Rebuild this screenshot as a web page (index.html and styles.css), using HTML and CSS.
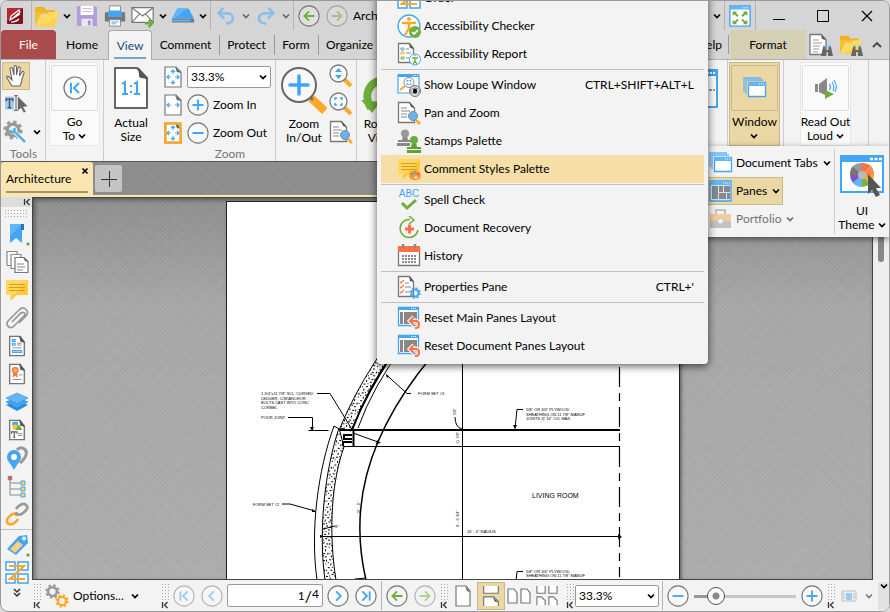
FILE: index.html
```html
<!DOCTYPE html>
<html lang="en">
<head>
    <meta charset="UTF-8">
    <meta name="viewport" content="width=device-width, initial-scale=1.0">
    <title>Architecture</title>
    <link rel="stylesheet" href="styles.css">
</head>
<body>

<!-- Icon sprite -->
<svg class="sprite" aria-hidden="true">
    <symbol id="chev" viewBox="0 0 8 8"><path d="M1 2.5l3 3 3-3" fill="none" stroke="currentColor" stroke-width="1.7"/></symbol>
    <symbol id="chev-up" viewBox="0 0 10 8"><path d="M1 6l4-4 4 4" fill="none" stroke="#444" stroke-width="1.8"/></symbol>
    <symbol id="collapse" viewBox="0 0 8 8"><path d="M1.5 1v6M6.5 1l-3 3 3 3" fill="none" stroke="#333" stroke-width="1.3"/></symbol>
    <symbol id="page" viewBox="0 0 24 24"><path d="M4 1.500h11l5 6v15H4z" fill="#fff" stroke="#777" stroke-width="1.5"/><path d="M15 1l5 7-4-1z" fill="#555" stroke="#555"/></symbol>
    <symbol id="logo" viewBox="0 0 16 16"><rect width="16" height="16" rx="1" fill="#7f1420"/><path d="M0 0h16L0 13z" fill="#b52832"/><path d="M3 12l1-4 8-6 1 2-7 6zM4 14c3 0 6-1 8-3M5 11l8-5" stroke="#fff" stroke-width="1.200" fill="none"/></symbol>
    <symbol id="folder" viewBox="0 0 24 24"><path d="M0 3h9l2 3h9v4H0z" fill="#f0b323"/><path d="M0 4v19l6-13h14V8H0z" fill="#f7c02e"/><path d="M6 11h6l2-3h10l-4 15H1z" fill="#ffd964"/><path d="M1 23l21-9-2 9z" fill="#ffd04a"/></symbol>
    <symbol id="save" viewBox="0 0 24 24"><path d="M1 1h20l2 2v20H1z" fill="#b39ddb"/><path d="M5 1h14v10H5z" fill="#fff"/><path d="M7 4h10M7 7h10" stroke="#bbb"/><path d="M6 15h12v8H6z" fill="#ece6f7"/><path d="M13 17h3v5h-3z" fill="#a58fd0"/></symbol>
    <symbol id="print" viewBox="0 0 24 24"><path d="M6 1h12v6H6z" fill="#fff" stroke="#888"/><path d="M1 8h22v10H1z" fill="#777"/><path d="M5 6h14l1 7H4z" fill="#42a5f5"/><path d="M6 16h12v7H6z" fill="#fff" stroke="#888"/><path d="M8 18.500h8M8 20.500h5" stroke="#42a5f5"/></symbol>
    <symbol id="mail" viewBox="0 0 26 24"><path d="M1 3h23v16H1z" fill="#fff" stroke="#777" stroke-width="1.3"/><path d="M1 3l11.500 9L24 3M1 19l8-9m15 9l-8-9" fill="none" stroke="#777" stroke-width="1.200"/><path d="M15 20h8m-4-4l4 4-4 4" fill="none" stroke="#6fae3c" stroke-width="2.500"/></symbol>
    <symbol id="scan" viewBox="0 0 26 24"><path d="M7 4h12l6 11H1z" fill="#42a5f5"/><path d="M7 4h10L4 15H1z" fill="#64b5f6"/><path d="M1 15h24v4H1z" fill="#777"/><path d="M1 16h20v2H1z" fill="#64b5f6"/></symbol>
    <symbol id="undo" viewBox="0 0 22 20"><path d="M8 1L3 7l6 6M3 7h10c7 0 8 11 0 11h-2" fill="none" stroke="#8fbfe8" stroke-width="3"/></symbol>
    <symbol id="back" viewBox="0 0 24 24"><circle cx="12" cy="12" r="11" fill="#f8f8f8" fill-opacity=".3" stroke="#777" stroke-width="1.200"/><path d="M18 12H7m5-5l-5 5 5 5" fill="none" stroke="#6fae3c" stroke-width="2"/></symbol>
    <symbol id="full" viewBox="0 0 24 24"><path d="M1 1h22v22H1z" fill="#fff" stroke="#42a5f5" stroke-width="1.500"/><path d="M1 1h22v4H1z" fill="#64b5f6"/><path d="M14 3h7" stroke="#fff" stroke-dasharray="1 1"/><path d="M4 12V7h5L7.500 8.500l3 3-1.500 1.500-3-3zM20 12V7h-5l1.500 1.500-3 3L15 13l3-3zM4 16v5h5l-1.500-1.500 3-3L9 15l-3 3zM20 16v5h-5l1.500-1.500-3-3L15 15l3 3z" fill="#6fae3c"/></symbol>
    <symbol id="binoc" viewBox="0 0 12 12"><path d="M2 2h2.500v3h3V2H10l2 9H7V7H5v4H0z" fill="#666"/><path d="M2 1.500h2.500m3 0H10" stroke="#42a5f5" stroke-width="1.500"/></symbol>
    <symbol id="find-doc" viewBox="0 0 24 24"><path d="M1 1.500h11l5 5v15H1z" fill="#fff" stroke="#777" stroke-width="1.300"/><path d="M12 1l5 6-4-1z" fill="#555"/><path d="M4 7h6M4 10h9M4 13h7M4 16h6M4 19h5" stroke="#999"/><use href="#binoc" x="12" y="12" width="12" height="12"/></symbol>
    <symbol id="find-folder" viewBox="0 0 24 24"><use href="#folder" width="24" height="22"/><use href="#binoc" x="12" y="12" width="12" height="12"/></symbol>
    <symbol id="hand" viewBox="0 0 24 24"><path d="M8 22l-5-8c-1-2 1-2 2-1l3 3L6 5c0-2 2-2 2.500 0l1.500 6V3c0-2 2.500-2 2.500 0v8l1.500-7c.5-2 2.500-1 2.300.5L15.500 12l2.500-4c1-1.500 2.500-.5 2 1l-2 6c0 3-1 5-2 7z" fill="#fff" stroke="#666" stroke-width="1.100"/></symbol>
    <symbol id="select-text" viewBox="0 0 26 24"><path d="M1 4h10v14H1z" fill="#9fcdf5"/><path d="M2.500 9V6.500h7V9M6 7v9M4 16h4" stroke="#555" stroke-width="1.700" fill="none"/><path d="M11 3h4m-2 0v16m-2 0h4" stroke="#555" fill="none"/><path d="M15 4v15l3.500-3 3 5.500 2-1.500-3-5 5-.5z" fill="#666"/></symbol>
    <symbol id="gear" viewBox="0 0 24 24"><circle cx="12" cy="12" r="7" fill="none" stroke="currentColor" stroke-width="4"/><circle cx="12" cy="12" r="10" fill="none" stroke="currentColor" stroke-width="3" stroke-dasharray="4 3.850"/></symbol>
    <symbol id="tool-gear" viewBox="0 0 24 24"><use href="#gear" width="20" height="20" color="#999"/><path d="M10 10l12 12" stroke="#fff" stroke-width="4.500"/><path d="M7 10c1 4 6 2 4-2M12 12l10 10" fill="none" stroke="#5aaeea" stroke-width="2.800"/></symbol>
    <symbol id="first" viewBox="0 0 24 24"><circle cx="12" cy="12" r="11" fill="#fafafa" stroke="#777" stroke-width="1.200"/><path d="M8 7v10m8-10l-5 5 5 5" fill="none" stroke="#42a5f5" stroke-width="2"/></symbol>
    <symbol id="prev" viewBox="0 0 24 24"><circle cx="12" cy="12" r="11" fill="#fafafa" stroke="#777" stroke-width="1.200"/><path d="M14 7l-5 5 5 5" fill="none" stroke="#42a5f5" stroke-width="2"/></symbol>
    <symbol id="plus" viewBox="0 0 24 24"><circle cx="12" cy="12" r="11" fill="#f8f8f8" stroke="#777" stroke-width="1.200"/><path d="M6 12h12M12 6v12" stroke="#42a5f5" stroke-width="2"/></symbol>
    <symbol id="minus" viewBox="0 0 24 24"><circle cx="12" cy="12" r="11" fill="#f8f8f8" stroke="#777" stroke-width="1.200"/><path d="M6 12h12" stroke="#42a5f5" stroke-width="2"/></symbol>
    <symbol id="actual" viewBox="0 0 34 42"><path d="M1 1h22l10 10v30H1z" fill="#fff" stroke="#666" stroke-width="2" stroke-linejoin="round"/><path d="M22 1h3l8 9v3c-3-3-8-1-8-4s0-6-3-8z" fill="#555"/><path d="M8 17l3-2v12m-3 0h6M20 17l3-2v12m-3 0h6" fill="none" stroke="#42a5f5" stroke-width="2"/><path d="M16 18h2v2h-2zM16 24h2v2h-2z" fill="#42a5f5"/></symbol>
    <symbol id="fit" viewBox="0 0 18 22"><path d="M1 1h11l5 5v15H1z" fill="#fff" stroke="#777" stroke-width="1.200"/><path d="M11 1l6 6-4-1z" fill="#555"/><path d="M7 6l2-2 2 2M9 4v4M7 16l2 2 2-2m-2 2v-4M5 9l-2 2 2 2m-2-2h4M13 9l2 2-2 2m2-2h-4" fill="none" stroke="#42a5f5" stroke-width="1.200"/></symbol>
    <symbol id="fit-w" viewBox="0 0 18 22"><path d="M1 1h11l5 5v15H1z" fill="#fff" stroke="#777" stroke-width="1.200"/><path d="M11 1l6 6-4-1z" fill="#555"/><path d="M5 9l-2 2 2 2m-2-2h4M13 9l2 2-2 2m2-2h-4" fill="none" stroke="#42a5f5" stroke-width="1.200"/></symbol>
    <symbol id="fit-v" viewBox="0 0 18 22"><use href="#fit" width="18" height="22"/><path d="M1.500 1.500h15v19h-15z" fill="none" stroke="#ffa726" stroke-width="2.500"/></symbol>
    <symbol id="zoom-big" viewBox="0 0 46 48"><path d="M30 31l14 13" stroke="#ffa726" stroke-width="8"/><path d="M28 29l4 4" stroke="#777" stroke-width="3"/><circle cx="18" cy="18" r="17" fill="#f8f8f8" stroke="#666" stroke-width="2"/><path d="M9 18h18M18 9v18" stroke="#42a5f5" stroke-width="3.500" stroke-linecap="round"/></symbol>
    <symbol id="lens" viewBox="0 0 24 24"><path d="M15 15l7 7" stroke="#ffa726" stroke-width="4"/><circle cx="9.500" cy="9.500" r="8.500" fill="#fafafa" stroke="#777" stroke-width="1.300"/></symbol>
    <symbol id="zoom-page" viewBox="0 0 24 24"><use href="#lens" width="24" height="24"/><path d="M6 8l3.500-4L13 8zM6 11l3.500 4 3.500-4z" fill="#42a5f5"/></symbol>
    <symbol id="zoom-area" viewBox="0 0 24 24"><use href="#lens" width="24" height="24"/><path d="M6 8V6h2m3 0h2v2m0 3v2h-2m-3 0H6v-2" fill="none" stroke="#42a5f5" stroke-width="1.500"/></symbol>
    <symbol id="pan" viewBox="0 0 24 24"><path d="M1.500 1.500h11l5 6v14h-16z" fill="#fff" stroke="#777" stroke-width="1.300"/><path d="M12 1l6 6-4-1z" fill="#555"/><path d="M4 7h6M4 10h9M4 13h6M4 16h6" stroke="#888"/><path d="M19 19l4 4" stroke="#ffa726" stroke-width="2.500"/><circle cx="16" cy="15" r="4.500" fill="#64b5f6" stroke="#888"/></symbol>
    <symbol id="rotate" viewBox="0 0 40 40"><path d="M10 34C0 18 12 2 30 7" fill="none" stroke="#6fae3c" stroke-width="8"/><path d="M0 26l19 2-8 11z" fill="#6fae3c"/></symbol>
    <symbol id="split" viewBox="0 0 34 40"><path d="M1 1h31v37H1z" fill="#fff" stroke="#42a5f5" stroke-width="2"/><path d="M1 1h31v6H1z" fill="#42a5f5"/><path d="M22 4h9" stroke="#fff" stroke-width="2" stroke-dasharray="2 1"/><path d="M4 21h26" stroke="#333" stroke-dasharray="3 1"/></symbol>
    <symbol id="windows" viewBox="0 0 24 22"><path d="M1 15V1h17M3 17V3h17" fill="none" stroke="#64b5f6" stroke-width="1.300"/><path d="M5.500 5.500h17v14h-17z" fill="#fff" stroke="#42a5f5" stroke-width="1.300"/><path d="M5 5h18v4H5z" fill="#64b5f6"/><path d="M16 7h6" stroke="#fff" stroke-dasharray="1 1"/></symbol>
    <symbol id="speaker" viewBox="0 0 24 24"><path d="M1 8h3v8H1zM5 8l8-6v18l-8-4z" fill="#888"/><path d="M11 14l9 4-9 5z" fill="#6fae3c"/><path d="M15 8q3 3 0 6M18 6q3 4 1 9M20 4q4 6 1 12" fill="none" stroke="#42a5f5" stroke-width="1.200"/></symbol>
    <symbol id="panes" viewBox="0 0 24 22"><path d="M1 1h21v20H1z" fill="#cfe4f7" stroke="#42a5f5" stroke-width="1.300"/><path d="M1 1h21v4H1z" fill="#64b5f6"/><path d="M14 3h7" stroke="#fff" stroke-dasharray="1 1"/><path d="M3 6h6v13H3zM10 6h4v6h-4zM15 6h6v6h-6zM10 13h7v6h-7zM18 13h3v6h-3z" fill="#888"/></symbol>
    <symbol id="portfolio" viewBox="0 0 24 22"><path d="M7 6V2h9v4" fill="none" stroke="#999" stroke-width="2"/><path d="M1 6h21v8H1z" fill="#f3ae55"/><path d="M1 13h21v7H1z" fill="#999"/><circle cx="11.500" cy="13" r="3" fill="#eee" stroke="#999"/></symbol>
    <symbol id="theme" viewBox="0 0 44 42"><path d="M1 1h42v36H1z" fill="#fff" stroke="#42a5f5" stroke-width="2"/><path d="M1 1h42v6H1z" fill="#42a5f5"/><path d="M30 4h12" stroke="#fff" stroke-width="2.500" stroke-dasharray="3 1.500"/><path d="M22 20L13 11A12 12 0 0 1 22 8z" fill="#999"/><path d="M22 20V8a12 12 0 0 1 9 3z" fill="#ff7043"/><path d="M22 20l9-9a12 12 0 0 1 3 9z" fill="#ff8a50"/><path d="M22 20h12a12 12 0 0 1-4 9z" fill="#ffa726"/><path d="M22 20l8 9a12 12 0 0 1-8 3z" fill="#7cb342"/><path d="M22 20v12a12 12 0 0 1-9-4z" fill="#64b5f6"/><path d="M22 20l-9 8a12 12 0 0 1-3-8z" fill="#7e57c2"/><path d="M22 20H10a12 12 0 0 1 3-9z" fill="#777"/><circle cx="22" cy="20" r="4" fill="#bbb"/><path d="M28 19v20l4-4 4 7 4-2-4-7h5z" fill="#555"/></symbol>

    <symbol id="order" viewBox="0 0 24 24"><path d="M1 1h9v8H1zM13 1h10v8H13zM1 13h9v9H1zM13 13h10v9H13z" fill="#fff" stroke="#42a5f5" stroke-width="1.500"/><path d="M4 5h15L5 18h15" fill="none" stroke="#ffa726" stroke-width="2.200"/></symbol>
    <symbol id="acc-check" viewBox="0 0 24 24"><circle cx="12" cy="12" r="11" fill="#fff" stroke="#42a5f5" stroke-width="1.300"/><circle cx="12" cy="5" r="2" fill="#ffa726"/><path d="M5 9h14M12 9v5l-4 7M12 14l3 4" fill="none" stroke="#ffa726" stroke-width="2.500"/><circle cx="18" cy="18" r="6" fill="#6fae3c"/><path d="M15 18l2 2 4-4" fill="none" stroke="#fff" stroke-width="1.700"/></symbol>
    <symbol id="acc-report" viewBox="0 0 24 24"><path d="M1.500 1.500h11l4 5v14h-15z" fill="#fff" stroke="#777" stroke-width="1.300"/><path d="M12 1l5 6-4-1z" fill="#555"/><path d="M4 6h3v2H4z" fill="none" stroke="#42a5f5"/><path d="M4 10h3v2H4z" fill="none" stroke="#ffa726"/><path d="M4 15h3v2H4z" fill="none" stroke="#6fae3c"/><path d="M9 7h3M9 11h5M9 16h4" stroke="#888"/><circle cx="18" cy="17.500" r="5.500" fill="#fff" stroke="#42a5f5"/><path d="M15 16h6m-3 0v3l-2 3m2-3l2 3m-2-8v-1" fill="none" stroke="#6fae3c" stroke-width="1.300"/></symbol>
    <symbol id="loupe" viewBox="0 0 24 24"><path d="M1 2h21v18H1z" fill="#fff" stroke="#42a5f5" stroke-width="1.200"/><path d="M1 1h21v3H1z" fill="#42a5f5"/><path d="M16 2.500h5" stroke="#fff" stroke-dasharray="1 1"/><path d="M3 17l5-4" stroke="#ffa726" stroke-width="2"/><circle cx="12" cy="9.500" r="5" fill="#fff" stroke="#888"/><path d="M10 9V7.500h1.500m1 0H14V9m0 1v1.500h-1.500m-1 0H10V10" fill="none" stroke="#42a5f5"/><circle cx="18" cy="18" r="5.500" fill="#ddd" stroke="#777"/><path d="M13 18q5-6 10 0-5 5-10 0" fill="#fff" stroke="#777"/><circle cx="18" cy="18" r="2.300" fill="#111"/></symbol>
    <symbol id="stamps" viewBox="0 0 24 24"><path d="M0 14h13v3H0zM1 11h4l1-4h4l1 4h3v2H1z" fill="#888"/><circle cx="8" cy="4.500" r="4" fill="#999"/><path d="M10 21h14v3H10zM10 18h4l1-4h4l1 4h4v2H10z" fill="#5f9e35"/><circle cx="17" cy="11" r="4" fill="#6fae3c"/></symbol>
    <symbol id="comment" viewBox="0 0 24 24"><path d="M1 2h22v15H12l-7 6 1-6H1z" fill="#ffc83d"/><path d="M1 2h22L9 17H1z" fill="#ffd75e"/><path d="M4 6.500h16M4 9.500h16M4 12.500h16" stroke="#d99e14"/></symbol>
    <symbol id="comment-style" viewBox="0 0 24 24"><use href="#comment" width="24" height="24"/><ellipse cx="18" cy="18.500" rx="6" ry="5" fill="#f79a3c"/><circle cx="15" cy="17" r="1.200" fill="#6fae3c"/><circle cx="18" cy="15.500" r="1.200" fill="#42a5f5"/><circle cx="21" cy="17" r="1.200" fill="#ef5350"/><circle cx="19" cy="20.500" r="1.500" fill="#f5dfa6"/></symbol>
    <symbol id="recovery" viewBox="0 0 24 24"><path d="M13 3.500A9 9 0 1 0 21 14" fill="none" stroke="#6fae3c" stroke-width="1.600"/><path d="M12 0l5 4-5 4" fill="none" stroke="#6fae3c" stroke-width="1.500"/><path d="M8 13h9M12.500 8.500v9" stroke="#ff7043" stroke-width="3"/></symbol>
    <symbol id="calendar" viewBox="0 0 24 24"><path d="M1.500 4h21v17.500h-21z" fill="#fff" stroke="#777" stroke-width="1.300"/><path d="M1 2h22v6H1z" fill="#ff7043"/><path d="M6 0v4M18 0v4" stroke="#888" stroke-width="2.500"/><path d="M5 12h14M5 15h14M5 18h14" stroke="#888" stroke-width="2" stroke-dasharray="2 1"/></symbol>
    <symbol id="props" viewBox="0 0 24 24"><path d="M1.500 1.500h11l4 5v15h-15z" fill="#fff" stroke="#777" stroke-width="1.300"/><path d="M12 1l5 6-4-1z" fill="#555"/><path d="M3 7l1 1 3-3M3 12l1 1 3-3M3 17l1 1 3-3" fill="none" stroke="#ff7043" stroke-width="1.200"/><path d="M8 8h4M8 12h6M8 17h4" stroke="#888"/><use href="#gear" x="12" y="12" width="12" height="12" color="#42a5f5"/></symbol>
    <symbol id="reset" viewBox="0 0 24 24"><path d="M1.500 1.500h20v18h-20z" fill="#fff" stroke="#42a5f5" stroke-width="1.300"/><path d="M1 1h21v3H1z" fill="#42a5f5"/><path d="M14 2.500h6" stroke="#fff" stroke-dasharray="1 1"/><path d="M3 6h3v12H3zM7 6h13v12H7z" fill="#888"/><path d="M17 11l-4 4 4 4m-4-4h6c4 0 4 7 0 7h-1" fill="none" stroke="#f4f4f4" stroke-width="4.500"/><path d="M17 11l-4 4 4 4m-4-4h6c4 0 4 7 0 7h-1" fill="none" stroke="#ff7043" stroke-width="2"/></symbol>

    <symbol id="bookmark" viewBox="0 0 24 24"><path d="M5 2h12v19l-6-5-6 5z" fill="#42a5f5"/><path d="M5 2h12L5 14z" fill="#64b5f6"/><path d="M16 2h3v6h-3z" fill="#1e78c8"/></symbol>
    <symbol id="thumbs" viewBox="0 0 24 24"><path d="M2 1.500h10v14H2z" fill="#fff" stroke="#888" stroke-width="1.200"/><path d="M6 4.500h10v14H6z" fill="#fff" stroke="#888" stroke-width="1.200"/><path d="M10 7.500h9l4 4v11H10z" fill="#fff" stroke="#777" stroke-width="1.200"/><path d="M18 7l5 5-3-1z" fill="#555"/><path d="M12 14h7M12 17h8M12 20h6" stroke="#888"/></symbol>
    <symbol id="clip" viewBox="0 0 24 24"><path d="M7 16l9-9c3-2 5 1 3 3L9 20c-4 4-9-1-6-5L14 4c5-5 11 1 7 6l-7 7" fill="none" stroke="#999" stroke-width="1.700"/></symbol>
    <symbol id="fields" viewBox="0 0 24 24"><use href="#page" width="24" height="24"/><path d="M7 5h3v2H7zM7 9h3v2H7zM7 17h10v2H7z" fill="none" stroke="#42a5f5" stroke-width="1.200"/><path d="M12 9h5M12 11h5M7 14h10" stroke="#888"/></symbol>
    <symbol id="sign" viewBox="0 0 24 24"><use href="#page" width="24" height="24"/><circle cx="10" cy="8" r="3" fill="#ffb74d" stroke="#ff7043" stroke-width="1.500"/><path d="M8 11l-1 5 3-2 3 2-1-5z" fill="#ff7043"/><path d="M14 13h4M7 18h10" stroke="#888"/></symbol>
    <symbol id="layers" viewBox="0 0 24 24"><path d="M1 15l11-5 11 5-11 6z" fill="#2f8de0"/><path d="M1 12l11-5 11 5-11 6z" fill="#42a5f5" stroke="#2583d0" stroke-width=".5"/><path d="M1 8l11-5 11 5-11 6z" fill="#64b5f6" stroke="#2583d0" stroke-width=".5"/></symbol>
    <symbol id="content" viewBox="0 0 24 24"><use href="#page" width="24" height="24"/><path d="M7 3h6v5H7z" fill="#42a5f5"/><circle cx="10" cy="9" r="3" fill="#ffc83d"/><path d="M10 12l4-6 4 6z" fill="#6fae3c"/><path d="M6 16v-2h6v2M9 14v6M8 20h2" fill="none" stroke="#555" stroke-width="1.200"/><path d="M13 16h5M13 18h5" stroke="#888"/></symbol>
    <symbol id="pins" viewBox="0 0 24 24"><path d="M12 4c3-4 11-2 9 5-1 4-3 5-6 8" fill="none" stroke="#999" stroke-width="3"/><path d="M9 24C6 18 2 15 2 11a7 7 0 0 1 14 0c0 4-4 7-7 13z" fill="#42a5f5"/><circle cx="9" cy="11" r="3" fill="#fff"/></symbol>
    <symbol id="tree" viewBox="0 0 24 24"><path d="M5 4v17h12M5 9h12M5 15h12" fill="none" stroke="#888"/><path d="M3 2h4v4H3z" fill="#ff5733" stroke="#42a5f5" stroke-width=".5"/><path d="M16 7h4v4h-4zM16 13h4v4h-4zM16 19h4v4h-4z" fill="#ffd75e" stroke="#42a5f5"/></symbol>
    <symbol id="link" viewBox="0 0 24 24"><path d="M12 14c-2-4-5-2-7 0-4 3-4 7-1 8 3 2 8-3 9-5" fill="none" stroke="#ffa726" stroke-width="2.600"/><path d="M11 10c1 4 5 3 7 1 4-3 6-6 3-8-3-3-8 1-10 4" fill="none" stroke="#999" stroke-width="2.600"/></symbol>
    <symbol id="tag" viewBox="0 0 24 24"><path d="M2 16L14 3l8-1 1 8-12 12z" fill="#42a5f5"/><path d="M5 16l8-8 5 4-8 8z" fill="#ffcc80"/><circle cx="19" cy="5.500" r="2" fill="#fff"/></symbol>
    <symbol id="gears" viewBox="0 0 24 24"><use href="#gear" width="15" height="15" color="#999"/><use href="#gear" x="10" y="10" width="14" height="14" color="#ffa726"/></symbol>
    <symbol id="single" viewBox="0 0 16 22"><path d="M1 1h10l4 5v15H1z" fill="#fff" stroke="#777" stroke-width="1.200"/><path d="M10 1l5 6-3-1z" fill="#555"/></symbol>
    <symbol id="cont" viewBox="0 0 18 24"><path d="M1 1v8h16V1M1 23v-10h11l5 5v5" fill="#fff" stroke="#777" stroke-width="1.300"/><path d="M11 13l6 6-4-1z" fill="#555"/></symbol>
    <symbol id="two" viewBox="0 0 24 16"><path d="M1 1h6l3 4v10H1zM14 1h6l3 4v10h-9z" fill="#fff" stroke="#777" stroke-width="1.200"/></symbol>
    <symbol id="two-cont" viewBox="0 0 24 24"><path d="M1 1v8h9V1M14 1v8h9V1M1 22v-9h5l4 4v5M14 22v-9h5l4 4v5" fill="#fff" stroke="#777" stroke-width="1.200"/></symbol>
    <symbol id="view" viewBox="0 0 16 12"><path d="M1 1h14v10H1z" fill="#eee" stroke="#888"/><path d="M5 3h6v7H5z" fill="#42a5f5"/><path d="M2 4h2M2 6h2M2 8h2M12 4h2M12 6h2M12 8h2" stroke="#888"/></symbol>
</svg>

<div class="window">

    <header class="titlebar">
        <svg class="i16 logo"><use href="#logo"/></svg>
        <i class="vr"></i>
        <button aria-label="Open"><svg class="i24"><use href="#folder"/></svg></button>
        <button class="arrow" aria-label="Open menu"><svg class="i8"><use href="#chev"/></svg></button>
        <button aria-label="Save"><svg class="i22"><use href="#save"/></svg></button>
        <button aria-label="Print"><svg class="i22"><use href="#print"/></svg></button>
        <button aria-label="Mail"><svg class="i24"><use href="#mail"/></svg></button>
        <button class="arrow" aria-label="Mail menu"><svg class="i8"><use href="#chev"/></svg></button>
        <button aria-label="Scan"><svg class="i24"><use href="#scan"/></svg></button>
        <button class="arrow" aria-label="Scan menu"><svg class="i8"><use href="#chev"/></svg></button>
        <i class="vr"></i>
        <button aria-label="Undo"><svg class="i20"><use href="#undo"/></svg></button>
        <button class="arrow dim" aria-label="Undo list"><svg class="i8"><use href="#chev"/></svg></button>
        <button aria-label="Redo"><svg class="i20 flip"><use href="#undo"/></svg></button>
        <button class="arrow dim" aria-label="Redo list"><svg class="i8"><use href="#chev"/></svg></button>
        <i class="vr"></i>
        <button aria-label="Previous view"><svg class="i22"><use href="#back"/></svg></button>
        <button class="dim" aria-label="Next view"><svg class="i22 flip"><use href="#back"/></svg></button>
        <span class="title">Architecture</span>
        <div class="title-right">
            <button class="arrow" aria-label="Theme menu"><svg class="i8"><use href="#chev"/></svg></button>
            <i class="vr"></i>
            <button aria-label="Full screen"><svg class="i22"><use href="#full"/></svg></button>
            <i class="vr"></i>
            <button class="sys" aria-label="Minimize"><svg class="i14" viewBox="0 0 14 14"><path d="M1 10.500h12" stroke="#000"/></svg></button>
            <button class="sys" aria-label="Maximize"><svg class="i14" viewBox="0 0 14 14"><path d="M1.500 1.500h11v11h-11z" fill="none" stroke="#000"/></svg></button>
            <button class="sys" aria-label="Close"><svg class="i14" viewBox="0 0 14 14"><path d="M2 2l10 10M12 2L2 12" stroke="#000" stroke-width="1.200"/></svg></button>
        </div>
    </header>

    <nav class="tabs">
        <button class="tab file">File</button>
        <button class="tab plain home">Home</button>
        <button class="tab active"><span>View</span></button>
        <button class="tab plain comment">Comment</button>
        <button class="tab protect">Protect</button>
        <button class="tab form">Form</button>
        <button class="tab">Organize</button>
        <div class="tabs-right">
            <button class="tab plain">Help</button>
            <i class="vr"></i>
            <button class="tab format">Format</button>
            <button class="find" aria-label="Find"><svg class="i24"><use href="#find-doc"/></svg></button>
            <button class="find" aria-label="Search"><svg class="i24"><use href="#find-folder"/></svg></button>
            <button class="fold" aria-label="Collapse ribbon"><svg class="i10"><use href="#chev-up"/></svg></button>
        </div>
    </nav>

    <section class="ribbon">
        <div class="group tools">
            <button class="tool on" aria-label="Hand"><svg class="i24"><use href="#hand"/></svg></button>
            <button class="tool" aria-label="Select text"><svg class="i24"><use href="#select-text"/></svg></button>
            <button class="tool wide" aria-label="Other tools"><svg class="i24"><use href="#tool-gear"/></svg><svg class="i8"><use href="#chev"/></svg></button>
            <span class="caption">Tools</span>
        </div>
        <div class="group goto">
            <button class="big gallery">
                <span class="tile"><svg class="i24"><use href="#first"/></svg></span>
                <span>Go<br>To <svg class="i8"><use href="#chev"/></svg></span>
            </button>
        </div>
        <div class="group zoom">
            <div class="zoom-row">
                <button class="big"><svg class="i-actual"><use href="#actual"/></svg><span>Actual<br>Size</span></button>
                <div class="zoom-grid">
                    <button aria-label="Fit page"><svg class="i22"><use href="#fit"/></svg></button>
                    <div class="combo">
                        <select aria-label="Zoom"><option>33.3%</option></select>
                        <svg class="i8"><use href="#chev"/></svg>
                    </div>
                    <button aria-label="Fit width"><svg class="i22"><use href="#fit-w"/></svg></button>
                    <button class="label"><svg class="i22"><use href="#plus"/></svg>Zoom In</button>
                    <button aria-label="Fit visible"><svg class="i22"><use href="#fit-v"/></svg></button>
                    <button class="label"><svg class="i22"><use href="#minus"/></svg>Zoom Out</button>
                </div>
            </div>
            <span class="caption">Zoom</span>
        </div>
        <div class="group inout">
            <button class="big"><svg class="i-zoom"><use href="#zoom-big"/></svg><span>Zoom<br>In/Out</span></button>
            <div class="stack">
                <button aria-label="Dynamic zoom"><svg class="i24"><use href="#zoom-page"/></svg></button>
                <button aria-label="Loupe"><svg class="i24"><use href="#zoom-area"/></svg></button>
                <button aria-label="Pan and zoom"><svg class="i24"><use href="#pan"/></svg></button>
            </div>
        </div>
        <div class="group rotate">
            <button class="big"><svg class="i-rotate"><use href="#rotate"/></svg><span>Rotate<br>View</span></button>
        </div>
        <div class="ribbon-right">
            <div class="group split"><button class="big" aria-label="Split"><svg class="i-split"><use href="#split"/></svg></button></div>
            <div class="group win">
                <button class="big gallery on">
                    <span class="tile"><svg class="i24"><use href="#windows"/></svg></span>
                    <span>Window<br><svg class="i8"><use href="#chev"/></svg></span>
                </button>
            </div>
            <div class="group read">
                <button class="big gallery">
                    <span class="tile"><svg class="i24"><use href="#speaker"/></svg></span>
                    <span>Read Out<br>Loud <svg class="i8"><use href="#chev"/></svg></span>
                </button>
            </div>
        </div>
    </section>

    <div class="doctabs">
        <div class="doctab"><span>Architecture</span><button aria-label="Close tab"><svg class="i8" viewBox="0 0 8 8"><path d="M1.500 1.500l5 5m0-5l-5 5" stroke="#000" stroke-width="1.600"/></svg></button></div>
        <button class="newtab" aria-label="New tab"><svg class="i16" viewBox="0 0 16 16"><path d="M0 8.500h16M8.500 0v16" stroke="#333"/></svg></button>
    </div>

    <div class="work">
        <aside class="sidebar">
            <button class="hide" aria-label="Hide panes"><svg class="i8"><use href="#collapse"/></svg></button>
            <div class="dots"></div>
            <button class="pane more" aria-label="Bookmarks"><svg class="i24"><use href="#bookmark"/></svg></button>
            <button class="pane" aria-label="Thumbnails"><svg class="i24"><use href="#thumbs"/></svg></button>
            <button class="pane" aria-label="Comments"><svg class="i24"><use href="#comment"/></svg></button>
            <button class="pane" aria-label="Attachments"><svg class="i24"><use href="#clip"/></svg></button>
            <button class="pane" aria-label="Fields"><svg class="i22"><use href="#fields"/></svg></button>
            <button class="pane" aria-label="Signatures"><svg class="i22"><use href="#sign"/></svg></button>
            <button class="pane" aria-label="Layers"><svg class="i24"><use href="#layers"/></svg></button>
            <button class="pane" aria-label="Content"><svg class="i22"><use href="#content"/></svg></button>
            <button class="pane" aria-label="Destinations"><svg class="i24"><use href="#pins"/></svg></button>
            <button class="pane" aria-label="Structure"><svg class="i24"><use href="#tree"/></svg></button>
            <button class="pane" aria-label="Links"><svg class="i24"><use href="#link"/></svg></button>
            <hr>
            <button class="pane more" aria-label="Tags"><svg class="i24"><use href="#tag"/></svg></button>
            <button class="pane" aria-label="Order"><svg class="i24"><use href="#order"/></svg></button>
            <button class="hide-more" aria-label="More panes"><svg class="i10" viewBox="0 0 10 10"><path d="M2 1l3 3 3-3M2 5l3 3 3-3" fill="none" stroke="#333" stroke-width="1.500"/></svg></button>
        </aside>

        <div class="main">
            <div class="view">
                <div class="canvas">
                    <!-- Floor plan -->
                    <svg class="sheet" viewBox="227 202 452 585">
                        <defs>
                            <pattern id="concrete" width="13" height="17" patternUnits="userSpaceOnUse" patternTransform="rotate(11)">
                                <path d="M1 1h2v1H1zM4 3h2v1H4zM8 1h1v2H8zM11 4h1v2h-1zM2 6h1v2H2zM6 7h2v1H6zM9 8h2v1H9zM1 10h2v1H1zM5 11h1v2H5zM8 12h2v1H8zM11 11h1v2h-1zM3 14h1v2H3zM7 15h2v1H7zM11 15h1v1h-1zM4 9h1v1H4zM7 5h2v1H7zM0 4h1v1H0zM5 0h1v1H5zM0 13h1v1H0z"/>
                            </pattern>
                        </defs>
                        <rect x="227" y="202" width="452" height="585" fill="#fff"/>
                        <g fill="url(#concrete)" stroke="#000">
                            <path d="M428 290Q365 366 340 428L351 431Q368 392 392 356L440 300z"/>
                            <path d="M339 428C325 470 318 530 325 580L332 620H343L336 580C328 530 332 480 344 447z"/>
                        </g>
                        <g fill="none" stroke="#000">
                            <path d="M404 345Q373 386 358 428"/>
                            <path d="M394 352Q368 388 352 430" stroke-width="2"/>
                            <path d="M339 429l-5-3C318 470 310 530 317 580l6 40"/>
                            <path d="M446 340C355 440 352 520 366 580l12 40" stroke-width="1.500"/>
                            <path d="M340 430h280" stroke-width="2"/>
                            <path d="M343 446.500h277M321 536.500h299M462.500 300v320"/>
                            <path d="M619.500 367v210" stroke-dasharray="20 6 8 6" stroke-width="1.200"/>
                            <path d="M317 393.500h13l22 36M288 417.500h24.500v13m-4 0h20M411 393.500h-4l-21-19M282 504h8l25 7M523 409.500h-6l-2 19M523 571.500h-6l-2 19"/>
                            <path d="M353 433l25 9M455 417q0 10 7 12M355 579l11-1M323 529l12-3"/>
                            <path d="M353.500 430v16M343 446v-4h9M343 435h9M344 435v4h8" stroke-width="2"/>
                        </g>
                        <path d="M316 512l-4-3v3zM386 375l3 1-2 2zM312 431l-2-4h4zM381 443l-4-3-1 4zM515 429l-2-4h4zM320 538v-3l4 1zM622 537l-4-3v5z"/>
                        <g class="note">
                            <text x="261" y="395">1 3/4"x11 7/8" SCL 'CURVED'</text>
                            <text x="261" y="400">LEDGER, C/W ANCHOR</text>
                            <text x="261" y="404">BOLTS CAST INTO CONC</text>
                            <text x="261" y="409">CORBEL</text>
                            <text x="261" y="419">POUR JOINT</text>
                            <text x="418" y="395">FORM SET #3</text>
                            <text x="253" y="506">FORM SET #2</text>
                            <text x="526" y="411">5/8" OR 3/4" PLYWOOD</text>
                            <text x="526" y="416">SHEATHING ON 11 7/8" MANUF</text>
                            <text x="526" y="420">JOISTS @ 16" O/C MAX</text>
                            <text x="526" y="573">5/8" OR 3/4" PLYWOOD</text>
                            <text x="526" y="577">SHEATHING ON 11 7/8" MANUF</text>
                            <text x="467" y="533">16' - 0"  RADIUS</text>
                            <text x="335" y="528">8"</text>
                            <text transform="translate(360 514) rotate(-90)">10' - 0"</text>
                            <text transform="translate(459 527) rotate(-90)">9' - 6 3/4"</text>
                            <text transform="translate(459 444) rotate(-90)">11 7/8"</text>
                            <text transform="translate(456 415) rotate(-90)">5/8"</text>
                        </g>
                        <text class="room" x="532" y="498">LIVING ROOM</text>
                    </svg>
                </div>
                <div class="scroll"><i></i></div>
            </div>

            <footer class="status">
                <div class="grip"><svg class="i8"><use href="#collapse"/></svg></div>
                <button class="options"><svg class="i24"><use href="#gears"/></svg>Options...<svg class="i8"><use href="#chev"/></svg></button>
                <div class="grip"><svg class="i8"><use href="#collapse"/></svg></div>
                <button class="dim" aria-label="First page"><svg class="i22"><use href="#first"/></svg></button>
                <button class="dim" aria-label="Previous page"><svg class="i22"><use href="#prev"/></svg></button>
                <label class="pageno"><input type="text" value="1" aria-label="Page"><span>/</span><b>4</b></label>
                <button aria-label="Next page"><svg class="i22 flip"><use href="#prev"/></svg></button>
                <button aria-label="Last page"><svg class="i22 flip"><use href="#first"/></svg></button>
                <i class="vr"></i>
                <button aria-label="Previous view"><svg class="i22"><use href="#back"/></svg></button>
                <button class="dim" aria-label="Next view"><svg class="i22 flip"><use href="#back"/></svg></button>
                <div class="grip"><svg class="i8"><use href="#collapse"/></svg></div>
                <button class="mode" aria-label="Single page"><svg class="i22"><use href="#single"/></svg></button>
                <button class="mode on" aria-label="Continuous"><svg class="i22"><use href="#cont"/></svg></button>
                <button class="mode" aria-label="Two pages"><svg class="i24"><use href="#two"/></svg></button>
                <button class="mode" aria-label="Two pages continuous"><svg class="i22"><use href="#two-cont"/></svg></button>
                <div class="grip"><svg class="i8"><use href="#collapse"/></svg></div>
                <div class="combo">
                    <select aria-label="Zoom level"><option>33.3%</option></select>
                    <svg class="i8"><use href="#chev"/></svg>
                </div>
                <i class="vr"></i>
                <button aria-label="Zoom out"><svg class="i22"><use href="#minus"/></svg></button>
                <input class="slider" type="range" min="0" max="100" value="16" aria-label="Zoom slider">
                <button aria-label="Zoom in"><svg class="i22"><use href="#plus"/></svg></button>
                <div class="grip"><svg class="i8"><use href="#collapse"/></svg></div>
                <button class="dim views" aria-label="Panes view"><svg class="i16"><use href="#view"/></svg><svg class="i8"><use href="#chev"/></svg></button>
                <button class="end" aria-label="More"><svg class="i8"><use href="#chev"/></svg></button>
            </footer>
        </div>
    </div>

    <!-- Window drop-down -->
    <div class="popup">
        <div class="popup-list">
            <button><svg class="i24"><use href="#windows"/></svg>Document Tabs<svg class="i8"><use href="#chev"/></svg></button>
            <button class="on"><svg class="i24"><use href="#panes"/></svg>Panes<svg class="i8"><use href="#chev"/></svg></button>
            <button class="disabled"><svg class="i24"><use href="#portfolio"/></svg>Portfolio<svg class="i8"><use href="#chev"/></svg></button>
        </div>
        <button class="big theme"><svg class="i-theme"><use href="#theme"/></svg><span>UI<br>Theme <svg class="i8"><use href="#chev"/></svg></span></button>
    </div>

    <!-- Panes menu -->
    <div class="menu">
        <button><svg class="i24"><use href="#order"/></svg>Order</button>
        <button><svg class="i24"><use href="#acc-check"/></svg>Accessibility Checker</button>
        <button><svg class="i24"><use href="#acc-report"/></svg>Accessibility Report</button>
        <hr>
        <button><svg class="i24"><use href="#loupe"/></svg>Show Loupe Window<kbd>CTRL+SHIFT+ALT+L</kbd></button>
        <button><svg class="i24"><use href="#pan"/></svg>Pan and Zoom</button>
        <button><svg class="i24"><use href="#stamps"/></svg>Stamps Palette</button>
        <button class="on"><svg class="i24"><use href="#comment-style"/></svg>Comment Styles Palette</button>
        <hr>
        <button><svg class="i24" viewBox="0 0 24 24"><text class="abc" x="12" y="9" text-anchor="middle">ABC</text><path d="M5 15l5 5 9-8" fill="none" stroke="#6fae3c" stroke-width="3"/></svg>Spell Check</button>
        <button><svg class="i24"><use href="#recovery"/></svg>Document Recovery</button>
        <button><svg class="i24"><use href="#calendar"/></svg>History</button>
        <hr>
        <button><svg class="i24"><use href="#props"/></svg>Properties Pane<kbd>CTRL+'</kbd></button>
        <hr>
        <button><svg class="i24"><use href="#reset"/></svg>Reset Main Panes Layout</button>
        <button><svg class="i24"><use href="#reset"/></svg>Reset Document Panes Layout</button>
    </div>
</div>

</body>
</html>
```

FILE: styles.css
```css
* { box-sizing: border-box; }

body {
    margin: 0;
    background: #ddd;
    color: #000;
    font: 12px/14px Lato, "Open Sans", sans-serif;
}

button, select, input {
    font: inherit;
    color: inherit;
}

button {
    display: flex;
    align-items: center;
    justify-content: center;
    flex: none;
    margin: 0;
    padding: 0;
    border: 0;
    background: none;
    white-space: nowrap;
}

svg { flex: none; }
.sprite { display: none; }

/* icon sizes */
.i8 { width: 8px; height: 8px; }
.i10 { width: 10px; height: 10px; }
.i14 { width: 14px; height: 14px; }
.i16 { width: 16px; height: 16px; }
.i20 { width: 20px; height: 20px; }
.i22 { width: 22px; height: 22px; }
.i24 { width: 24px; height: 24px; }
.i-actual { width: 34px; height: 42px; }
.i-zoom { width: 46px; height: 48px; }
.i-rotate { width: 40px; height: 40px; }
.i-split { width: 34px; height: 40px; }
.i-theme { width: 44px; height: 42px; }
.flip { transform: scaleX(-1); }
.dim { opacity: .5; }

.vr {
    flex: none;
    width: 1px;
    align-self: stretch;
    background: #b4b4b4;
}

.window {
    position: relative;
    display: flex;
    flex-direction: column;
    height: 100vh;
    overflow: hidden;
    border: 1px solid #999;
    border-radius: 8px;
    background: #f3f3f3;
}

/* title bar */
.titlebar {
    display: flex;
    align-items: center;
    height: 29px;
    flex: none;
    background: #d5d5d5;
}
.titlebar .vr { margin: 0 1px; }
.logo { margin: 0 7px 0 6px; }
.titlebar button { height: 28px; width: 28px; }
.titlebar .arrow { width: 12px; }
.titlebar .sys { width: 44px; }
.title { margin-left: 2px; }
.title-right {
    display: flex;
    align-items: center;
    align-self: stretch;
    margin-left: auto;
}

/* ribbon tabs */
.tabs {
    display: flex;
    align-items: stretch;
    height: 30px;
    flex: none;
    background: #d5d5d5;
    border-bottom: 1px solid #b0b0b0;
}
.tab {
    position: relative;
    padding: 0 8px;
    background: linear-gradient(#999, #999) 0 5px / 1px 20px no-repeat;
}
.tab.plain { padding: 0 6px; background: none; }
.tab.home { width: 52px; }
.tab.comment { width: 67px; }
.tab.protect { width: 55px; }
.tab.form { width: 44px; }
.tab.file {
    width: 55px;
    background: #a94a4c;
    color: #fff;
    border-radius: 4px 4px 0 0;
}
.tab.active {
    width: 44px;
    margin-bottom: -1px;
    padding: 0;
    background: #f3f3f3;
    border: 1px solid #aaa;
    border-bottom: 0;
    border-radius: 4px 4px 0 0;
    color: #124a78;
}
.tab.active span {
    padding: 6px 3px 4px;
    border-bottom: 2px solid #7aa5c4;
}
.tabs-right {
    display: flex;
    align-items: center;
    margin-left: auto;
}
.tabs-right .vr { margin: 5px 2px 5px 0; background: #999; }
.tab.format {
    width: 74px;
    height: 29px;
    background: #d5cfb4;
    border: solid #e2cd85;
    border-width: 0 1px;
}
.find { width: 28px; margin-left: 2px; }
.fold { width: 24px; }

/* ribbon */
.ribbon {
    display: flex;
    height: 102px;
    flex: none;
    border-bottom: 1px solid #555;
    background: #f3f3f3;
}
.group {
    display: flex;
    flex: none;
    padding: 2px 4px 0;
    border-right: 1px solid #ccc;
}
.caption {
    color: #777;
    text-align: center;
}
.tools {
    flex-direction: column;
    width: 45px;
    padding: 2px 0 0 1px;
}
.tools .caption { margin-top: 1px; }
.goto { padding: 2px 3px 0; }
.tool {
    width: 28px;
    height: 28px;
    border: 1px solid transparent;
}
.tool.wide { width: 40px; gap: 6px; }
.on {
    background: #ead7a4;
    border-color: #c9b88b;
}
.big {
    flex-direction: column;
    justify-content: flex-start;
    height: 84px;
    line-height: 14px;
}
.gallery {
    width: 51px;
    padding: 2px 1px;
    border: 1px solid #e8e8e8;
    background: #fafafa;
}
.gallery.on {
    background: #ead7a4;
    border-color: #c9b88b;
}
.tile {
    display: flex;
    align-items: center;
    justify-content: center;
    align-self: stretch;
    height: 48px;
    margin-bottom: 4px;
    border: 1px solid #ddd;
    border-radius: 2px;
}
.on .tile { border-color: #c9b88b; }

.zoom {
    flex-direction: column;
    padding: 3px 0 0 5px;
    border-right: 0;
}
.zoom-row { display: flex; gap: 8px; }
.zoom .big { width: 44px; padding-top: 4px; }
.zoom .big svg { margin-bottom: 7px; }
.zoom-grid {
    display: grid;
    grid-template-columns: 24px 84px;
    grid-template-rows: 28px 28px 28px;
    column-gap: 2px;
    align-items: center;
}
.zoom .caption { margin: 0 0 0 80px; }
.label { gap: 4px; justify-content: flex-start; }

.combo {
    position: relative;
    width: 84px;
    height: 22px;
}
.combo select {
    width: 100%;
    height: 100%;
    padding: 0 3px;
    border: 1px solid #999;
    border-radius: 2px;
    background: #fff;
    appearance: none;
}
.combo svg {
    position: absolute;
    right: 4px;
    top: 7px;
    pointer-events: none;
}

.inout {
    margin-left: 4px;
    padding: 2px 3px 0;
    border-left: 1px solid #ccc;
}
.inout .big { width: 50px; padding-top: 5px; }
.inout .big svg { margin-bottom: 2px; }
.stack { display: grid; grid-template-rows: 28px 28px 28px; align-items: center; }
.rotate { padding-left: 4px; }
.rotate .big { padding-top: 12px; }
.rotate .big svg { margin-bottom: 3px; }

.ribbon-right { display: flex; margin-left: auto; }
.split { padding-right: 8px; }
.split .big { padding-top: 7px; }
.win { padding: 2px 3px 0 1px; }
.read { padding: 2px 17px 0 16px; margin-right: 20px; }

/* document tabs */
.doctabs {
    display: flex;
    align-items: flex-start;
    height: 35px;
    flex: none;
    gap: 2px;
    border-bottom: 2px solid #fbe6b2;
    background: repeating-linear-gradient(45deg, #ffffff0c 0 1px, #0000 1px 3px), #8c8c8c;
}
.doctab {
    display: flex;
    width: 92px;
    height: 35px;
    padding: 10px 4px 0 5px;
    border-radius: 3px 3px 0 0;
    background: linear-gradient(#a3946e, #a3946e) 5px 29px / 82px 2px no-repeat, #fbe6b2;
}
.doctab button { margin-left: auto; align-self: flex-start; margin-top: -5px; }
.newtab {
    width: 27px;
    height: 27px;
    margin-top: 3px;
    border-radius: 2px;
    background: #c4c4c4;
}

/* work area */
.work {
    display: flex;
    flex: 1;
    min-height: 0;
}
.sidebar {
    width: 31px;
    flex: none;
    overflow: hidden;
}
.sidebar button { width: 100%; height: 28px; }
.sidebar .hide { height: 10px; justify-content: flex-end; padding-right: 1px; background: #ddd; }
.dots {
    height: 9px;
    margin: 2px 3px;
    background: radial-gradient(#aaa 1px, #0000 1px) 0 0 / 3px 3px;
}
.more { background: radial-gradient(circle at 27px 24px, #5f9e35 1px, #0000 2px); }
.sidebar hr, .menu hr {
    height: 3px;
    margin: 0;
    border: 0;
    background: linear-gradient(#c0c0c0, #c0c0c0) 0 1px / 100% 1px no-repeat;
}
.sidebar .hide-more { height: 12px; }

.main {
    display: flex;
    flex-direction: column;
    flex: 1;
    min-width: 0;
}
.view {
    display: flex;
    flex: 1;
    min-height: 0;
}
.canvas {
    flex: 1;
    padding-top: 4px;
    overflow: hidden;
    text-align: center;
    border: 1px solid #444;
    background:
        repeating-linear-gradient(45deg, #ffffff0c 0 1px, #0000 1px 3px),
        repeating-linear-gradient(-45deg, #00000008 0 1px, #0000 1px 3px),
        linear-gradient(#8f8f8f, #a8a8a8 110px, #adadad);
    box-shadow: inset 2px 2px 4px #0006;
}
.sheet {
    width: 452px;
    height: 585px;
    outline: 1px solid #222;
    box-shadow: 2px 2px 4px #0008;
}
.note { font: 4px "Liberation Sans", Arial, sans-serif; fill: #000; }
.room { font: 7px "Liberation Sans", Arial, sans-serif; }
.abc { font: 10px "Liberation Sans", Arial, sans-serif; fill: #42a5f5; }
.scroll {
    width: 16px;
    padding: 0 5px;
    background: #eee;
}
.scroll i {
    display: block;
    height: 65px;
    border-radius: 3px;
    background: #888;
}

/* status bar */
.status {
    display: flex;
    align-items: center;
    height: 31px;
    flex: none;
    background: #f3f3f3;
}
.status button { width: 28px; height: 28px; }
.status .vr { margin: 1px; }
.grip {
    display: flex;
    align-items: flex-end;
    width: 10px;
    height: 26px;
    flex: none;
    background: radial-gradient(#aaa 1px, #0000 1px) 1px 0 / 3px 3px;
}
.grip svg { width: 10px; background: #f3f3f3; }
.status .options { width: 118px; gap: 4px; justify-content: flex-start; padding-left: 3px; }
.options .i8 { margin-left: 3px; }
.pageno {
    display: flex;
    align-items: center;
    width: 96px;
    height: 23px;
    margin: 0 1px;
    padding: 0 3px;
    border: 1px solid #999;
    border-radius: 2px;
    background: #fff;
}
.pageno input {
    flex: 1;
    min-width: 0;
    padding: 0;
    border: 0;
    outline: 0;
    text-align: right;
    background: none;
}
.pageno span { font-size: 16px; }
.pageno b { font-weight: normal; margin-bottom: 4px; }
.status .mode.on { border: 1px solid #c9b88b; }
.mode + .grip { margin-left: 4px; }
.mode + .grip + .combo { margin-right: 2px; }
.slider {
    appearance: none;
    flex: 1;
    min-width: 60px;
    height: 20px;
    margin: 0 2px;
    background: linear-gradient(90deg, #999 22px, #c6c6c6 22px) 0 9px / 100% 3px no-repeat;
}
.slider::-webkit-slider-thumb {
    appearance: none;
    width: 18px;
    height: 18px;
    border: 1px solid #555;
    border-radius: 50%;
    background: radial-gradient(#888 3px, #f8f8f8 4px);
}
.status .views { width: 42px; gap: 8px; }
.status .end { width: 11px; align-items: flex-start; background: #e2e2e2; }

/* drop-down under Window */
.popup {
    position: absolute;
    top: 145px;
    right: 0;
    display: flex;
    width: 200px;
    height: 91px;
    padding: 3px 0;
    background: #f3f3f3;
    box-shadow: 0 2px 6px #0008;
}
.popup-list {
    flex: 1;
    padding-left: 15px;
    border-right: 1px solid #ccc;
}
.popup-list button {
    height: 28px;
    gap: 3px;
    padding: 0 2px 0 4px;
    border: 1px solid transparent;
}
.popup-list .i8 { margin-left: 2px; }
.popup-list .on { border-color: #c9b88b; }
.disabled { opacity: .55; }
.popup .theme { width: 54px; padding-top: 6px; }
.theme svg.i-theme { margin-bottom: 7px; }

/* panes menu */
.menu {
    position: absolute;
    top: -21px;
    left: 376px;
    width: 331px;
    padding: 4px;
    border-radius: 4px;
    background: #f3f3f3;
    box-shadow: 0 2px 8px #000a;
}
.menu button {
    width: 100%;
    height: 28px;
    padding: 0 10px 0 16px;
    gap: 3px;
    justify-content: flex-start;
}
.menu .on { background: #f5dfa6; }
.menu kbd { margin-left: auto; font: inherit; }
```
